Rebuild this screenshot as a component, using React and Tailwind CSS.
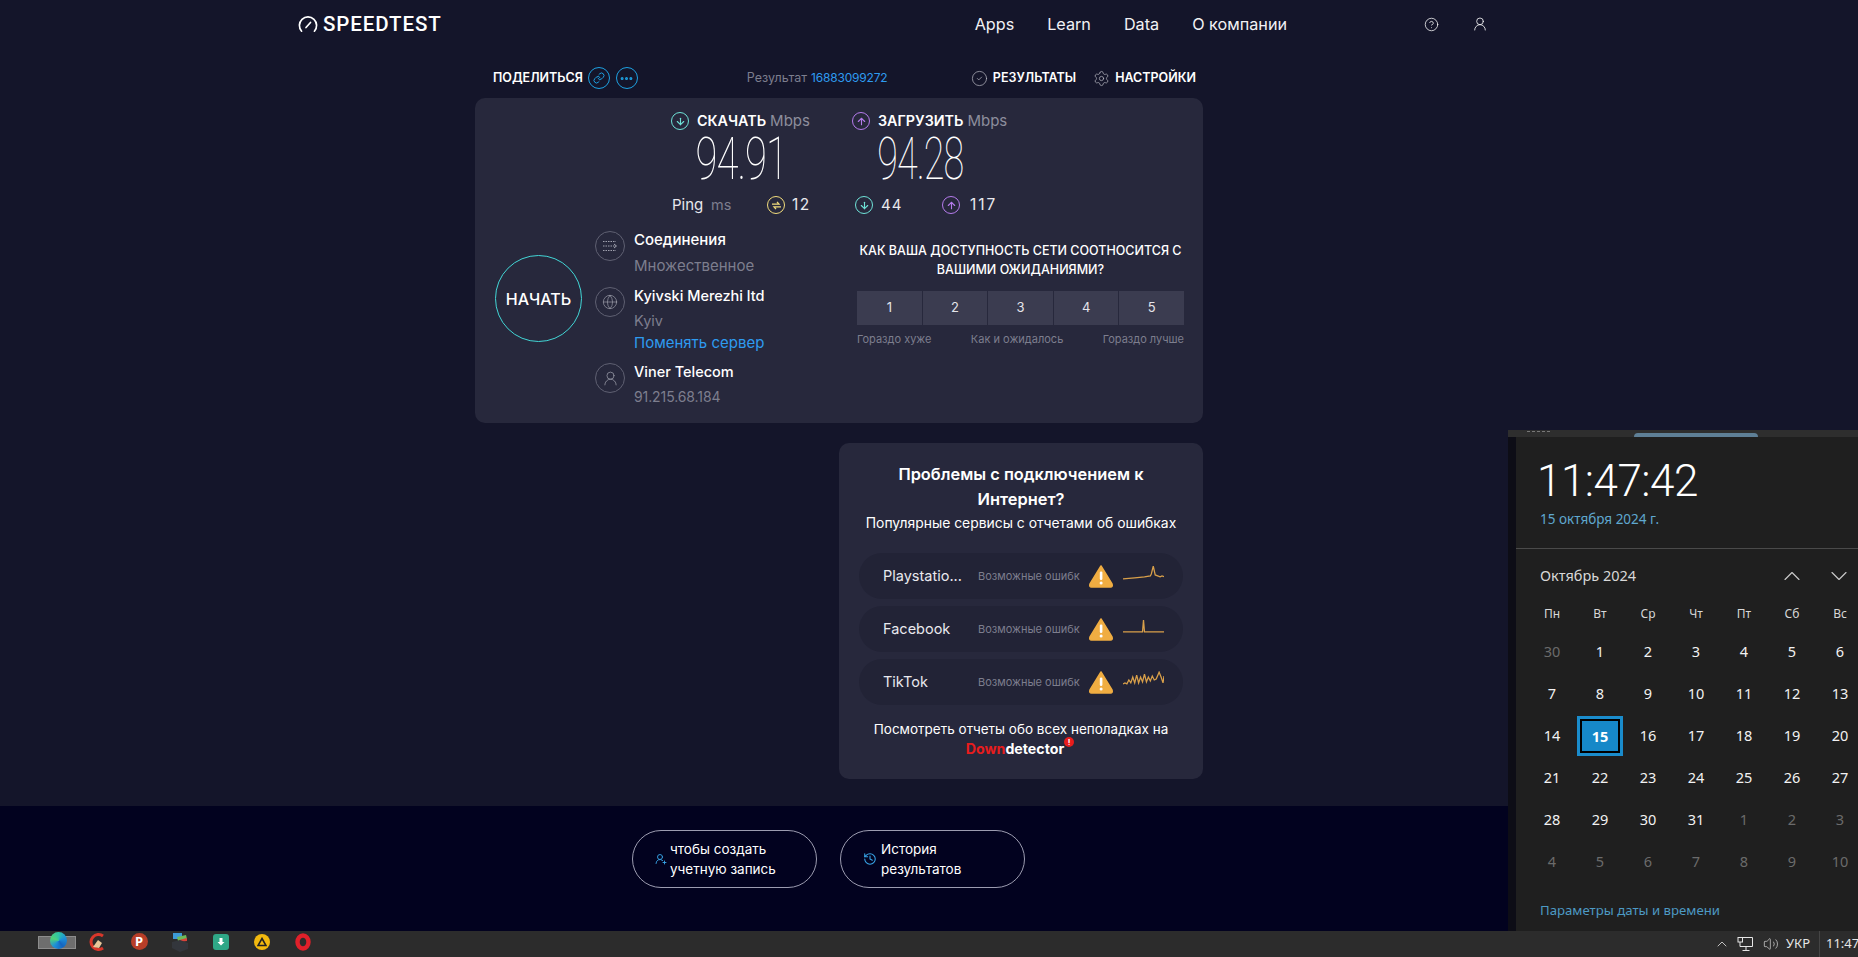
import React from 'react';
import { ArrowDown, ArrowUp, ChevronDown, ChevronUp, CircleCheck, CircleHelp, Ellipsis, Globe, History, Link, Settings, UserRound, UserRoundPlus, Volume2 } from 'lucide-react';

const days = [
  [[30, 1], [1], [2], [3], [4], [5], [6]],
  [[7], [8], [9], [10], [11], [12], [13]],
  [[14], [15, 2], [16], [17], [18], [19], [20]],
  [[21], [22], [23], [24], [25], [26], [27]],
  [[28], [29], [30], [31], [1, 1], [2, 1], [3, 1]],
  [[4, 1], [5, 1], [6, 1], [7, 1], [8, 1], [9, 1], [10, 1]],
];

const outages = [
  { name: 'Playstatio...', points: '0,14 12,13 22,12 28,11 29,9 31,1 33,10 38,12 40,11 46,13 52,14' },
  { name: 'Facebook', points: '0,14 18,14 20,14 21,2 22,14 40,14 52,14' },
  { name: 'TikTok', points: '0,13 2,12 4,13 6,9 8,12 10,6 12,12 14,4 16,12 18,6 20,11 22,3 24,11 26,6 28,10 30,5 32,9 34,8 37,1 39,6 41,12 42,5' },
];

function RingIcon({ color, children, size = 'w-[18px] h-[18px]' }) {
  return (
    <span className={`${size} rounded-full border-[1.5px] flex items-center justify-center shrink-0 ${color}`}>
      {children}
    </span>
  );
}

function Warning() {
  return (
    <svg width="26" height="24" viewBox="0 0 26 24" className="shrink-0 ml-[8px]">
      <path d="M13 2 L24 20 Q25 23 22.5 23 L3.5 23 Q1 23 2 20 Z" fill="#f0ad42" stroke="#f0ad42" strokeWidth="1.5" strokeLinejoin="round" />
      <rect x="11.8" y="7.5" width="2.6" height="8.5" rx="1.2" fill="#fff" />
      <circle cx="13.1" cy="19" r="1.5" fill="#fff" />
    </svg>
  );
}

function DetailRow({ icon, children }) {
  return (
    <div className="flex gap-[9px]">
      <span className="w-[30px] h-[30px] mt-[4px] rounded-full border border-[#5f6072] flex items-center justify-center text-[#a0a1ae] shrink-0">
        {icon}
      </span>
      <div>{children}</div>
    </div>
  );
}

function SpeedHead({ label, ring, icon, width }) {
  return (
    <div className={width}>
      <div className="flex items-center h-[20px] gap-[8px] -ml-[1px]">
        <RingIcon color={ring}>{icon}</RingIcon>
        <span className="font-semibold text-white text-[14.3px]">{label}</span>
        <span className="text-[#8d8e9d] -ml-[4px] text-[15px]">Mbps</span>
      </div>
    </div>
  );
}

function BigNumber({ value, width, scale }) {
  return (
    <div className={`${width} pl-[25px]`}>
      <div className="w-[85px] h-[56px] flex items-center justify-center">
        <span className={`[font-family:Roboto,sans-serif] font-thin text-[59px] leading-[56px] text-white tracking-tight ${scale}`}>{value}</span>
      </div>
    </div>
  );
}

function TrayBox({ children, className }) {
  return <span className={`w-[20px] h-[20px] mb-[5px] flex items-center justify-center shrink-0 ${className || ''}`}>{children}</span>;
}

export default function App() {
  return (
    <div className="relative h-screen overflow-hidden flex flex-col bg-[#14152a] text-white [font-family:Inter,sans-serif]">
      <div className="h-[806px] shrink-0">
        {/* Header */}
        <header className="h-[48px] pl-[298px] flex items-center">
          <svg width="20" height="18" viewBox="0 0 20 18" fill="none" stroke="#fff" strokeWidth="1.7" strokeLinecap="round">
            <path d="M3.6 16.2 A8.6 8.6 0 1 1 16.4 16.2" />
            <path d="M8 12.5 L12.5 7.5" />
          </svg>
          <span className="ml-[5px] text-[20.5px] font-medium tracking-[0.9px] [font-family:Roboto,sans-serif]">SPEEDTEST</span>
          <nav className="flex items-center gap-[33px] ml-[533px] text-[16.2px] text-[#f2f2f5]">
            <span>Apps</span>
            <span>Learn</span>
            <span>Data</span>
            <span>О компании</span>
          </nav>
          <CircleHelp className="w-[15px] h-[15px] ml-[137px] shrink-0" strokeWidth={1.2} />
          <UserRound className="w-[16px] h-[16px] ml-[33px] shrink-0" strokeWidth={1.2} />
        </header>

        <div className="w-[728px] ml-[475px]">
          {/* Share row */}
          <div className="h-[50px] pt-[10px] pl-[18px] pr-[7px] flex items-center">
            <span className="text-[12.5px] font-semibold">ПОДЕЛИТЬСЯ</span>
            <RingIcon color="border-[#1da1e2] text-[#1da1e2] ml-[5px]" size="w-[22px] h-[22px]"><Link className="w-[12px] h-[12px]" strokeWidth={2} /></RingIcon>
            <RingIcon color="border-[#1da1e2] text-[#1da1e2] ml-[6px]" size="w-[22px] h-[22px]"><Ellipsis className="w-[15px] h-[15px]" strokeWidth={2.8} /></RingIcon>
            <span className="ml-[109px] text-[12.5px] text-[#7d7e8e]">Результат</span>
            <span className="ml-[4px] text-[12px] tracking-[-0.2px] text-[#2e9bf0]">16883099272</span>
            <div className="ml-auto flex items-center">
              <CircleCheck className="w-[17px] h-[17px] text-[#b9bac4] shrink-0" strokeWidth={1} />
              <span className="ml-[5px] text-[12.5px] font-semibold">РЕЗУЛЬТАТЫ</span>
              <Settings className="w-[17px] h-[17px] ml-[17px] text-[#b9bac4] shrink-0" strokeWidth={1} />
              <span className="ml-[5px] text-[12.5px] font-semibold">НАСТРОЙКИ</span>
            </div>
          </div>

          {/* Result card */}
          <section className="h-[325px] bg-[#27283c] rounded-[10px] pt-[13px]">
            <div className="flex pl-[197px]">
              <SpeedHead label="СКАЧАТЬ" width="w-[181px]" ring="border-[#6fe3d8] text-[#6fe3d8]" icon={<ArrowDown className="w-[11px] h-[11px]" strokeWidth={2.4} />} />
              <SpeedHead label="ЗАГРУЗИТЬ" width="w-[181px]" ring="border-[#b57bec] text-[#b57bec]" icon={<ArrowUp className="w-[11px] h-[11px]" strokeWidth={2.4} />} />
            </div>
            <div className="flex pl-[199px]">
              <BigNumber value="94.91" width="w-[179px]" scale="scale-x-[0.68]" />
              <BigNumber value="94.28" width="w-[181px]" scale="scale-x-[0.64]" />
            </div>
            <div className="flex items-center h-[24px] mt-[6px] pl-[197px] text-[15px]">
              <span className="w-[39px] text-[#e9e9ee]">Ping</span>
              <span className="w-[56px] text-[14.5px] text-[#7d7e8e]">ms</span>
              <RingIcon color="border-[#f1dc7c] text-[#f1dc7c]" >
                <svg width="11" height="11" viewBox="0 0 11 11" fill="none" stroke="currentColor" strokeWidth="1.3"><path d="M1 4.2 H8 L6 1.8 M10 6.8 H3 L5 9.2" /></svg>
              </RingIcon>
              <span className="w-[63px] ml-[7px] text-[15.5px] text-[#e9e9ee] tracking-[1.5px]">12</span>
              <RingIcon color="border-[#6fe3d8] text-[#6fe3d8]"><ArrowDown className="w-[11px] h-[11px]" strokeWidth={2.4} /></RingIcon>
              <span className="w-[61px] ml-[8px] text-[#e9e9ee] tracking-[1px]">44</span>
              <RingIcon color="border-[#b57bec] text-[#b57bec]"><ArrowUp className="w-[11px] h-[11px]" strokeWidth={2.4} /></RingIcon>
              <span className="ml-[10px] text-[15.5px] text-[#e9e9ee] tracking-[2px]">117</span>
            </div>

            <div className="flex pl-[20px] mt-[9px]">
              <div className="w-[87px] h-[87px] mt-[29px] rounded-full border border-[#42d6d6] flex items-center justify-center text-[16px] font-medium shrink-0">
                НАЧАТЬ
              </div>
              <div className="w-[275px] pl-[13px] shrink-0 flex flex-col gap-[4px] pt-[1px]">
                <DetailRow icon={
                  <svg width="16" height="14" viewBox="0 0 16 14" fill="none" stroke="currentColor" strokeWidth="1" strokeDasharray="1.5 1"><path d="M1 2.5 H14 M1 7 H14 M1 11.5 H14" /><path d="M12 5 L14.5 7 L12 9" strokeDasharray="none" /></svg>
                }>
                  <div className="h-[26px] leading-[26px] text-[15px] font-medium">Соединения</div>
                  <div className="h-[26px] leading-[26px] text-[15px] text-[#7d7e8e]">Множественное</div>
                </DetailRow>
                <DetailRow icon={<Globe className="w-[16px] h-[16px]" strokeWidth={1} />}>
                  <div className="h-[26px] leading-[26px] text-[14.5px] font-medium">Kyivski Merezhi ltd</div>
                  <div className="h-[24px] leading-[24px] text-[14.5px] text-[#7d7e8e]">Kyiv</div>
                  <div className="h-[20px] mb-[2px] leading-[20px] text-[15px] text-[#2e9bf0]">Поменять сервер</div>
                </DetailRow>
                <DetailRow icon={<UserRound className="w-[17px] h-[17px]" strokeWidth={1} />}>
                  <div className="h-[26px] leading-[26px] text-[14.5px] font-medium">Viner Telecom</div>
                  <div className="h-[24px] leading-[24px] text-[14px] tracking-[-0.1px] text-[#7d7e8e]">91.215.68.184</div>
                </DetailRow>
              </div>
              <div className="w-[327px] pt-[15px]">
                <p className="text-center text-[12.5px] font-medium leading-[19px]">КАК ВАША ДОСТУПНОСТЬ СЕТИ СООТНОСИТСЯ С ВАШИМИ ОЖИДАНИЯМИ?</p>
                <div className="grid grid-cols-5 gap-px h-[34px] mt-[12px]">
                  {[1, 2, 3, 4, 5].map(n => (
                    <div key={n} className="bg-[#3b3c50] flex items-center justify-center text-[13px] text-[#e4e4ea]">{n}</div>
                  ))}
                </div>
                <div className="flex justify-between mt-[6px] text-[11px] leading-[16px] text-[#7d7e8e]">
                  <span>Гораздо хуже</span>
                  <span>Как и ожидалось</span>
                  <span>Гораздо лучше</span>
                </div>
              </div>
            </div>
          </section>

          {/* Downdetector card */}
          <section className="w-[364px] h-[336px] ml-auto mt-[20px] bg-[#27283c] rounded-[10px] pt-[19px] px-[20px]">
            <h3 className="text-center text-[16.4px] font-semibold leading-[25px]">Проблемы с подключением к<br />Интернет?</h3>
            <p className="text-center text-[13.9px] leading-[22px] whitespace-nowrap">Популярные сервисы с отчетами об ошибках</p>
            <div className="mt-[19px] flex flex-col gap-[7px]">
              {outages.map(o => (
                <div key={o.name} className="h-[46px] rounded-full bg-[#222336] flex items-center pl-[24px]">
                  <span className="w-[95px] text-[14.5px] text-[#e9e9ee] shrink-0 whitespace-nowrap">{o.name}</span>
                  <span className="w-[102px] overflow-hidden whitespace-nowrap text-[11px] text-[#7d7e8e] shrink-0">Возможные ошибки</span>
                  <Warning />
                  <svg width="41" height="16" viewBox="0 0 42 16" className="ml-[9px] -mt-[6px] shrink-0" fill="none" stroke="#d9a04a" strokeWidth="1.3"><polyline points={o.points} /></svg>
                </div>
              ))}
            </div>
            <p className="text-center text-[13.5px] leading-[20px] mt-[14px] whitespace-nowrap">Посмотреть отчеты обо всех неполадках на</p>
            <p className="text-center text-[14.2px] leading-[20px] font-bold pr-[12px]">
              <span className="relative">
                <span className="text-[#e81c1c]">Down</span>detector
                <span className="absolute left-full top-[-3px] w-[10px] h-[10px] rounded-full bg-[#e81c1c] text-center text-[8px] leading-[10px] text-white">!</span>
              </span>
            </p>
          </section>
        </div>
      </div>

      {/* Bottom band */}
      <div className="flex-1 bg-[#02021f] pt-[24px] pl-[632px] flex items-start gap-[23px]">
        <div className="w-[185px] h-[58px] rounded-full border border-[#9c9cb0] flex items-center pl-[22px] gap-[3px] text-[13.5px] leading-[20px]">
          <UserRoundPlus className="w-[12px] h-[12px] text-[#38a7ea] shrink-0" strokeWidth={1.8} />
          <span>чтобы создать<br />учетную запись</span>
        </div>
        <div className="w-[185px] h-[58px] rounded-full border border-[#9c9cb0] flex items-center pl-[22px] gap-[4px] text-[13.5px] leading-[20px]">
          <History className="w-[14px] h-[14px] text-[#38a7ea] shrink-0" strokeWidth={1.8} />
          <span>История<br />результатов</span>
        </div>
      </div>

      {/* Taskbar */}
      <div className="h-[26px] shrink-0 bg-[#2c2c2c] flex items-center pl-[38px] text-[#e6e6e6] [font-family:'Noto_Sans',sans-serif] text-[13px]">
        <div className="w-[38px] h-[13px] mb-[4px] bg-[#6e6e6e] border border-[#8d8d8d] relative shrink-0">
          <span className="absolute left-[11px] top-[-5px] w-[17px] h-[17px] rounded-full bg-[conic-gradient(#2fc5a5,#1d8fd8,#1565c0,#1d8fd8,#50d27a,#2fc5a5)]" />
        </div>
        <TrayBox className="ml-[12px]">
          <svg width="18" height="18" viewBox="0 0 18 18"><path d="M14 3 A7.5 7.5 0 1 0 14 15" fill="none" stroke="#d8372b" strokeWidth="3" /><path d="M4 14 L9 7 L13 10 L10 15 Z" fill="#e8c79a" /></svg>
        </TrayBox>
        <TrayBox className="ml-[21px]">
          <span className="w-[17px] h-[17px] rounded-full bg-[#b83e28] text-center text-white font-bold text-[13px] leading-[17px]">P</span>
        </TrayBox>
        <TrayBox className="ml-[21px]">
          <svg width="18" height="20" viewBox="0 0 18 20"><rect x="2" y="1" width="9" height="6" fill="#3d9bd8" /><path d="M6 5 L15 3 L16 7 L7 9 Z" fill="#6dbb5a" /><path d="M8 8 L16 6 L16 9 L8 10 Z" fill="#d8433a" /><path d="M1 10 L9 8 L17 11 L17 17 L9 20 L1 16 Z" fill="#33363c" /></svg>
        </TrayBox>
        <TrayBox className="ml-[21px]">
          <span className="w-[16px] h-[16px] rounded-[3px] bg-[#2fa787] flex items-center justify-center">
            <svg width="10" height="10" viewBox="0 0 10 10"><path d="M3.5 1 H6.5 V5 H8.5 L5 8.5 L1.5 5 H3.5 Z" fill="#fff" /></svg>
          </span>
        </TrayBox>
        <TrayBox className="ml-[21px]">
          <span className="w-[16px] h-[16px] rounded-full bg-[#f2b90f] flex items-center justify-center">
            <svg width="10" height="10" viewBox="0 0 10 10"><path d="M5 1.5 L9 8.5 H1 Z" fill="none" stroke="#222" strokeWidth="1.6" /></svg>
          </span>
        </TrayBox>
        <TrayBox className="ml-[21px]">
          <svg width="18" height="18" viewBox="0 0 18 18"><ellipse cx="9" cy="9" rx="5.5" ry="6.5" fill="none" stroke="#e0202a" strokeWidth="4.4" /></svg>
        </TrayBox>
        <ChevronUp className="w-[16px] h-[16px] ml-[1401px] shrink-0" strokeWidth={1.2} />
        <svg width="17" height="16" viewBox="0 0 17 16" fill="none" stroke="#e6e6e6" strokeWidth="1" className="ml-[7px] shrink-0"><path d="M5.5 1.5 H15.5 V10.5 H3 V6" /><rect x="1" y="1.5" width="4.5" height="4.5" /><path d="M9 10.5 V14 M5.5 14.5 H12.5" /></svg>
        <Volume2 className="w-[16px] h-[16px] ml-[9px] shrink-0" strokeWidth={1} />
        <span className="ml-[7px] shrink-0">УКР</span>
        <span className="w-px h-[26px] bg-[#454545] ml-[9px] shrink-0" />
        <span className="ml-[6px] shrink-0">11:47</span>
      </div>

      {/* Clock flyout */}
      <div className="absolute right-0 top-[430px] w-[350px] h-[501px] bg-[#0d0d16] overflow-hidden">
        <div className="h-[7px] bg-[#2e2e2e] relative">
          <span className="absolute left-[19px] top-[1px] w-[23px] h-[1px] border-t border-dashed border-[#777]" />
          <span className="absolute left-[126px] top-[3px] w-[124px] h-[4px] rounded-t-[4px] bg-[#5e7f96]" />
        </div>
        <div className="ml-[8px] h-[494px] bg-[#1f1f1f] [font-family:'Noto_Sans',sans-serif]">
          <div className="pl-[21px] h-[112px] border-b border-[#4a4a4a]">
            <div className="pt-[16px] h-[70px] text-[44px] leading-[56px] tracking-[-0.5px] font-light [font-family:Roboto,sans-serif]">11:47:42</div>
            <div className="pl-[3px] text-[13.5px] leading-[20px] mt-[2px] text-[#5fa8cf]">15 октября 2024 г.</div>
          </div>
          <div className="flex items-center h-[54px] pl-[24px] text-[14.5px] text-[#d8d8d8]">
            <span className="w-[238px] shrink-0">Октябрь 2024</span>
            <ChevronUp className="w-[28px] h-[28px] text-[#c8c8c8] shrink-0" strokeWidth={1} />
            <ChevronDown className="w-[28px] h-[28px] ml-[19px] text-[#c8c8c8] shrink-0" strokeWidth={1} />
          </div>
          <div className="w-[336px] ml-[12px]">
            <div className="grid grid-cols-[repeat(7,48px)] h-[22px] text-[12px] leading-[22px] text-center text-[#d8d8d8]">
              {['Пн', 'Вт', 'Ср', 'Чт', 'Пт', 'Сб', 'Вс'].map(d => <span key={d}>{d}</span>)}
            </div>
            <div className="grid grid-cols-[repeat(7,48px)] auto-rows-[42px] mt-[6px] text-[14.5px] text-center">
              {days.flat().map(([d, kind], i) => (
                <div key={i} className="flex items-center justify-center">
                  {kind === 2 ? (
                    <span className="w-[46px] h-[40px] border-[3px] border-[#1a8ccc] flex">
                      <span className="flex-1 border-2 border-black bg-[#1688c8] font-bold leading-[30px]">{d}</span>
                    </span>
                  ) : (
                    <span className={kind === 1 ? 'text-[#6b6b6b]' : 'text-[#f2f2f2]'}>{d}</span>
                  )}
                </div>
              ))}
            </div>
          </div>
          <div className="pl-[24px] mt-[17px] text-[13.2px] leading-[20px] text-[#4d9ac4]">Параметры даты и времени</div>
        </div>
      </div>
    </div>
  );
}
